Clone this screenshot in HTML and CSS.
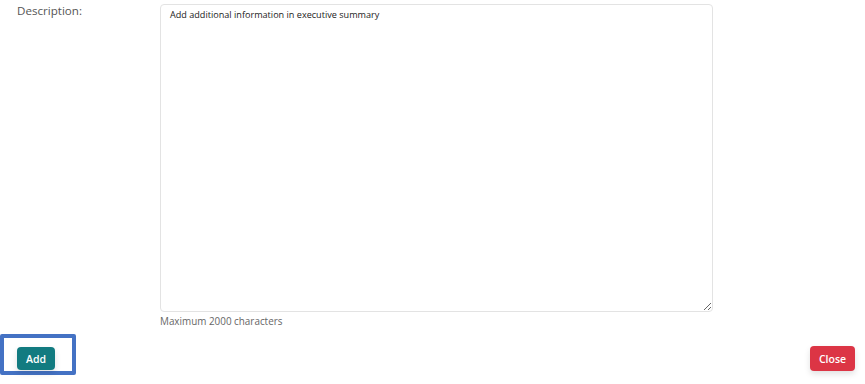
FILE: index.html
```html
<!DOCTYPE html>
<html lang="en">
<head>
    <meta charset="UTF-8">
    <title>Add note</title>
    <link rel="stylesheet" href="styles.css">
</head>
<body>
    <form class="note-form">
        <div class="field-row">
            <label class="field-label" for="description">Description:</label>
            <div class="field-input">
                <textarea id="description" class="description-box">Add additional information in executive summary</textarea>
                <div class="hint">Maximum 2000 characters</div>
            </div>
        </div>
        <div class="actions">
            <div class="focus-ring">
                <button type="button" class="btn btn-add">Add</button>
            </div>
            <button type="button" class="btn btn-close">Close</button>
        </div>
    </form>
</body>
</html>
```

FILE: styles.css
```css
body {
    margin: 0;
    font-family: "Open Sans", Arial, sans-serif;
    background-color: #fff;
    color: #333;
}
.note-form {
    width: 865px;
    height: 384px;
    display: flex;
    flex-direction: column;
}
.field-row {
    display: flex;
    padding-top: 4px;
}
.field-label {
    width: 143px;
    padding-left: 17px;
    font-size: 11.6px;
    line-height: 14px;
    color: #555;
}
.field-input {
    width: 553px;
}
.description-box {
    display: block;
    width: 553px;
    height: 308px;
    box-sizing: border-box;
    padding: 3px 9px;
    border: 1px solid #e3e3e3;
    border-radius: 4px;
    font-family: "Open Sans", Arial, sans-serif;
    font-size: 9.1px;
    color: #222;
    resize: vertical;
    outline: none;
}
.hint {
    margin-top: 2px;
    font-size: 9.9px;
    color: #666;
}
.actions {
    display: flex;
    justify-content: space-between;
    align-items: flex-end;
    padding-right: 10px;
    margin-top: 6px;
}
.focus-ring {
    display: flex;
    align-items: flex-start;
    width: 76px;
    height: 41px;
    box-sizing: border-box;
    border: 4px solid #4472c4;
    border-radius: 2px;
    padding: 9px 0 0 13px;
}
.btn {
    border: none;
    border-radius: 4px;
    color: #fff;
    font-family: "Open Sans", Arial, sans-serif;
    font-size: 10.5px;
    font-weight: 600;
    cursor: pointer;
    box-shadow: 0 3px 6px rgba(0, 0, 0, 0.12);
}
.btn-add {
    width: 38px;
    height: 23px;
    background-color: #127b80;
}
.btn-close {
    width: 45px;
    height: 25px;
    margin-bottom: 4px;
    background-color: #dc3545;
}
```
